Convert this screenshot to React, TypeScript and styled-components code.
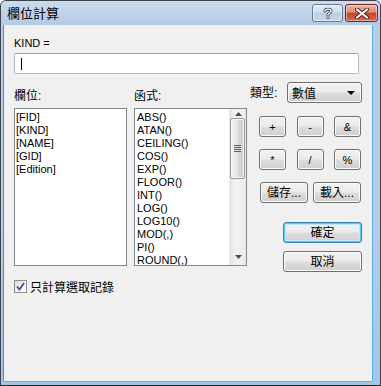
import React from 'react';
import styled, { createGlobalStyle } from 'styled-components';

const Global = createGlobalStyle`
  html, body { margin: 0; padding: 0; background: #ffffff; }
  body { font-family: "Liberation Sans", Arial, sans-serif; }
  * { box-sizing: border-box; }
`;

const CJK = `"Liberation Sans", "Noto Sans CJK TC", sans-serif`;

const Window = styled.div`
  width: 381px;
  height: 386px;
  display: flex;
  flex-direction: column;
  border: 1px solid #3d434c;
  border-bottom-color: #23272d;
  border-radius: 6px 6px 0 0;
  background: linear-gradient(to bottom, #c6d8ec 0px, #b6cde6 24px, #b4cde8 60%, #9fc6ea 100%);
  overflow: hidden;
`;

const TitleBar = styled.div`
  height: 24px;
  display: flex;
  align-items: flex-start;
  padding: 0 2px 0 6px;
  background: linear-gradient(to bottom, #cddcee, #b3c9e3);
  flex-shrink: 0;
`;

const Title = styled.div`
  font-family: ${CJK};
  font-size: 13px;
  line-height: 16px;
  margin-top: 5px;
  color: #000;
  flex: 1;
`;

const CaptionButton = styled.div<{ $kind: 'help' | 'close' }>`
  margin-top: 3px;
  height: 18px;
  width: ${(p) => (p.$kind === 'help' ? 31 : 33)}px;
  margin-left: ${(p) => (p.$kind === 'help' ? 0 : 2)}px;
  border: 1px solid ${(p) => (p.$kind === 'help' ? '#6b7a8f' : '#6e2419')};
  border-radius: 3px;
  display: flex;
  align-items: center;
  justify-content: center;
  background: ${(p) =>
    p.$kind === 'help'
      ? 'linear-gradient(to bottom, #e3ebf5 0%, #d2deec 45%, #bccee3 50%, #c9d9ea 100%)'
      : 'linear-gradient(to bottom, #eab3a6 0%, #dd8d7b 45%, #c7432b 50%, #d36c4f 100%)'};
  box-shadow: inset 0 0 0 1px rgba(255, 255, 255, 0.45);
`;

const Client = styled.div`
  flex: 1;
  margin: 0 8px 4px 3px;
  background: #f0f0f0;
  box-shadow: -1px 0 0 #3c8fdc, 0 1px 0 #3cc3ea, 1px 0 0 #5aaee6;
  padding: 12px 10px 0 10px;
  display: flex;
  flex-direction: column;
  font-size: 11px;
  color: #000;
`;

const ExprLabel = styled.div`
  font-size: 11px;
  line-height: 13px;
  height: 13px;
`;

const TextBox = styled.div`
  margin-top: 3px;
  width: 345px;
  height: 21px;
  background: #fff;
  border: 1px solid #a7bcd3;
  border-top-color: #8fa5bf;
  border-radius: 2px;
  display: flex;
  align-items: center;
  padding-left: 6px;
`;

const Caret = styled.span`
  width: 1px;
  height: 12px;
  background: #000;
`;

const MainRow = styled.div`
  margin-top: 8px;
  display: flex;
  align-items: flex-start;
`;

const Column = styled.div<{ $w: number; $ml: number }>`
  width: ${(p) => p.$w}px;
  margin-left: ${(p) => p.$ml}px;
  display: flex;
  flex-direction: column;
`;

const ColLabel = styled.div`
  height: 26px;
  padding-top: 7px;
  font-family: ${CJK};
  font-size: 12px;
  line-height: 14px;
`;

const ListBox = styled.div`
  height: 158px;
  background: #fff;
  border: 1px solid #828790;
  display: flex;
`;

const ListItems = styled.div<{ $pl: number }>`
  flex: 1;
  padding: 2px 0 0 ${(p) => p.$pl}px;
  overflow: hidden;
`;

const Item = styled.div`
  font-size: 11px;
  line-height: 13px;
  height: 13px;
  white-space: nowrap;
`;

const ScrollBar = styled.div`
  width: 17px;
  display: flex;
  flex-direction: column;
  background: linear-gradient(to right, #e3e3e3, #f1f1f1 30%, #f1f1f1 70%, #e8e8e8);
  border-left: 1px solid #eaeaea;
`;

const ArrowBox = styled.div<{ $h: number }>`
  height: ${(p) => p.$h}px;
  display: flex;
  align-items: center;
  justify-content: center;
`;

const Thumb = styled.div`
  height: 61px;
  margin: 0 1px 0 0;
  border: 1px solid #979797;
  border-radius: 2px;
  background: linear-gradient(to right, #f1f1f1, #e6e6e6 50%, #d6d6d6 51%, #cfcfcf);
  box-shadow: inset 0 0 0 1px #f8f8f8;
  display: flex;
  align-items: center;
  justify-content: center;
`;

const TrackSpace = styled.div`
  flex: 1;
`;

const TypeRow = styled.div`
  height: 21px;
  display: flex;
  align-items: center;
  justify-content: space-between;
`;

const TypeLabel = styled.span`
  font-family: ${CJK};
  font-size: 12px;
  line-height: 14px;
`;

const buttonFace = `
  border: 1px solid #707070;
  border-radius: 3px;
  background: linear-gradient(to bottom, #f2f2f2 0%, #ebebeb 48%, #dddddd 52%, #cfcfcf 100%);
  box-shadow: inset 0 0 0 1px #fbfbfb;
`;

const Combo = styled.div`
  width: 75px;
  height: 21px;
  ${buttonFace}
  display: flex;
  align-items: center;
  justify-content: space-between;
  padding: 0 6px 0 4px;
  font-family: ${CJK};
  font-size: 12px;
`;

const OpGrid = styled.div`
  margin-top: 13px;
  margin-left: 9px;
  width: 102px;
  display: grid;
  grid-template-columns: 27px 27px 27px;
  grid-auto-rows: 21px;
  row-gap: 12px;
  justify-content: space-between;
`;

const WideRow = styled.div`
  grid-column: 1 / -1;
  display: flex;
  justify-content: space-between;
  padding-left: 1px;
`;

const Button = styled.div<{ $w: number; $focused?: boolean; $cjk?: boolean }>`
  width: ${(p) => p.$w}px;
  height: 21px;
  ${buttonFace}
  ${(p) =>
    p.$focused
      ? `border-color: #3c7fb1; box-shadow: inset 0 0 0 1px #58cbf6, inset 0 0 0 2px #bfe9fb;`
      : ''}
  display: flex;
  align-items: center;
  justify-content: center;
  font-family: ${(p) => (p.$cjk ? CJK : '"Liberation Sans", Arial, sans-serif')};
  font-size: ${(p) => (p.$cjk ? 12 : 11)}px;
  line-height: 14px;
  color: #000;
`;

const DialogButtons = styled.div`
  margin-top: 19px;
  display: flex;
  flex-direction: column;
  align-items: flex-end;
  gap: 8px;
`;

const CheckRow = styled.div`
  margin-top: 6px;
  height: 16px;
  display: flex;
  align-items: center;
  gap: 3px;
  font-family: ${CJK};
  font-size: 12px;
`;

const CheckBox = styled.div`
  width: 13px;
  height: 13px;
  border: 1px solid #8e8f8f;
  background: linear-gradient(135deg, #dcdcdc, #ffffff);
  display: flex;
  align-items: center;
  justify-content: center;
`;

const fields = ['[FID]', '[KIND]', '[NAME]', '[GID]', '[Edition]'];
const funcs = [
  'ABS()', 'ATAN()', 'CEILING()', 'COS()', 'EXP()', 'FLOOR()',
  'INT()', 'LOG()', 'LOG10()', 'MOD(,)', 'PI()', 'ROUND(,)',
];

const UpArrow = () => (
  <svg width="7" height="4" viewBox="0 0 7 4"><path d="M0 4 L3.5 0 L7 4 Z" fill="#4d4d4d" /></svg>
);
const DownArrow = ({ c = '#4d4d4d', w = 7, h = 4 }: { c?: string; w?: number; h?: number }) => (
  <svg width={w} height={h} viewBox={`0 0 ${w} ${h}`}><path d={`M0 0 L${w} 0 L${w / 2} ${h} Z`} fill={c} /></svg>
);

export default function App() {
  return (
    <>
      <Global />
      <Window>
        <TitleBar>
          <Title>欄位計算</Title>
          <CaptionButton $kind="help">
            <svg width="10" height="12" viewBox="0 0 10 12">
              <path d="M2 4 C2 1.5 8 1.5 8 4 C8 6 5 6 5 8 M5 9.6 L5 10.8" fill="none" stroke="#3c4656" strokeWidth="3" strokeLinecap="round" />
              <path d="M2 4 C2 1.5 8 1.5 8 4 C8 6 5 6 5 8 M5 9.6 L5 10.8" fill="none" stroke="#ffffff" strokeWidth="1.4" strokeLinecap="round" />
            </svg>
          </CaptionButton>
          <CaptionButton $kind="close">
            <svg width="14" height="11" viewBox="0 0 14 11">
              <path d="M2 1.5 L12 9.5 M12 1.5 L2 9.5" stroke="#5b1a12" strokeWidth="4" strokeLinecap="round" />
              <path d="M2 1.5 L12 9.5 M12 1.5 L2 9.5" stroke="#ffffff" strokeWidth="2.2" strokeLinecap="round" />
            </svg>
          </CaptionButton>
        </TitleBar>
        <Client>
          <ExprLabel>KIND =</ExprLabel>
          <TextBox>
            <Caret />
          </TextBox>
          <MainRow>
            <Column $w={113} $ml={0}>
              <ColLabel>欄位:</ColLabel>
              <ListBox>
                <ListItems $pl={1}>
                  {fields.map((f) => (
                    <Item key={f}>{f}</Item>
                  ))}
                </ListItems>
              </ListBox>
            </Column>
            <Column $w={113} $ml={7}>
              <ColLabel>函式:</ColLabel>
              <ListBox>
                <ListItems $pl={2}>
                  {funcs.map((f) => (
                    <Item key={f}>{f}</Item>
                  ))}
                </ListItems>
                <ScrollBar>
                  <ArrowBox $h={9}>
                    <UpArrow />
                  </ArrowBox>
                  <Thumb>
                    <svg width="7" height="7" viewBox="0 0 7 7">
                      <path d="M0 0.5 H7 M0 2.5 H7 M0 4.5 H7 M0 6.5 H7" stroke="#606060" strokeWidth="1" />
                    </svg>
                  </Thumb>
                  <TrackSpace />
                  <ArrowBox $h={16}>
                    <DownArrow />
                  </ArrowBox>
                </ScrollBar>
              </ListBox>
            </Column>
            <Column $w={112} $ml={3}>
              <TypeRow>
                <TypeLabel>類型:</TypeLabel>
                <Combo>
                  <span>數值</span>
                  <DownArrow c="#000" w={8} h={4} />
                </Combo>
              </TypeRow>
              <OpGrid>
                <Button $w={27}>+</Button>
                <Button $w={27}>-</Button>
                <Button $w={27}>&amp;</Button>
                <Button $w={27}>*</Button>
                <Button $w={27}>/</Button>
                <Button $w={27}>%</Button>
                <WideRow>
                  <Button $w={48} $cjk>儲存...</Button>
                  <Button $w={48} $cjk>載入...</Button>
                </WideRow>
              </OpGrid>
              <DialogButtons>
                <Button $w={79} $cjk $focused>確定</Button>
                <Button $w={79} $cjk>取消</Button>
              </DialogButtons>
            </Column>
          </MainRow>
          <CheckRow>
            <CheckBox>
              <svg width="9" height="9" viewBox="0 0 9 9">
                <path d="M1 4.5 L3.5 7.5 L8 1" fill="none" stroke="#3553a4" strokeWidth="1.8" />
              </svg>
            </CheckBox>
            <span>只計算選取記錄</span>
          </CheckRow>
        </Client>
      </Window>
    </>
  );
}
